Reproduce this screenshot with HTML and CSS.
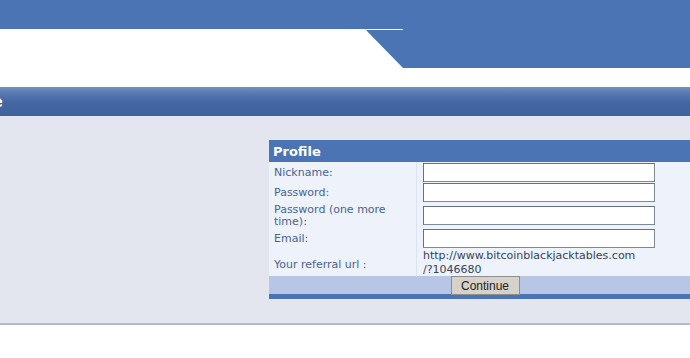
FILE: index.html
```html
<!DOCTYPE html>
<html lang="en">
<head>
    <meta charset="UTF-8">
    <title>Profile</title>
    <link rel="stylesheet" href="styles.css">
</head>
<body>
    <div class="top-band"></div>
    <div class="banner">
        <div class="banner-tab"></div>
    </div>
    <div class="title-bar">
        <span class="title-text">Profile</span>
    </div>

    <div class="main">
        <form class="profile" onsubmit="return false">
            <div class="profile-head">Profile</div>
            <div class="profile-rows">
                <div class="row row-1">
                    <label class="cell-label" for="nick">Nickname:</label>
                    <div class="cell-field"><input type="text" id="nick"></div>
                </div>
                <div class="row row-2">
                    <label class="cell-label" for="pass">Password:</label>
                    <div class="cell-field"><input type="password" id="pass"></div>
                </div>
                <div class="row row-3">
                    <label class="cell-label" for="pass2">Password (one more time):</label>
                    <div class="cell-field"><input type="password" id="pass2"></div>
                </div>
                <div class="row row-4">
                    <label class="cell-label" for="email">Email:</label>
                    <div class="cell-field"><input type="text" id="email"></div>
                </div>
                <div class="row row-5">
                    <div class="cell-label">Your referral url :</div>
                    <div class="cell-field referral">http://www.bitcoinblackjacktables.com<br>/?1046680</div>
                </div>
            </div>
            <div class="profile-foot">
                <button type="submit">Continue</button>
            </div>
        </form>
    </div>
</body>
</html>
```

FILE: styles.css
```css
:root {
    --brand-blue: #4a74b3;
    --page-bg: #e3e6ee;
    --label-bg: #edf2fb;
    --foot-bg: #b7c6e4;
    --label-text: #4a6391;
}

* {
    margin: 0;
    padding: 0;
    box-sizing: border-box;
}

body {
    margin: 0;
    width: 690px;
    height: 358px;
    overflow: hidden;
    background: #fff;
    font-family: 'DejaVu Sans', Verdana, sans-serif;
    font-size: 11px;
}

/* Header */
.top-band {
    height: 29px;
    background: var(--brand-blue);
}

.banner {
    height: 58px;
    background: #fff;
}

.banner-tab {
    position: relative;
    margin-left: 365px;
    height: 39px;
    background: var(--brand-blue);
    clip-path: polygon(0 0, 100% 0, 100% 100%, 38px 100%);
}

.banner-tab::before {
    content: '';
    position: absolute;
    top: 0;
    left: 0;
    width: 38px;
    height: 1px;
    background: #fff;
}

.title-bar {
    height: 29px;
    overflow: hidden;
    background: linear-gradient(to bottom, #7190c0 0%, #5577b0 25%, #4466a0 55%, #3f62a0 100%);
    display: flex;
    align-items: center;
}

.title-text {
    margin-left: -56px;
    color: #fff;
    font-weight: bold;
    font-size: 16px;
}

/* Content */
.main {
    height: 209px;
    background: var(--page-bg);
    border-bottom: 2px solid #b6bac2;
    padding: 24px 0 0 269px;
}

.profile {
    width: 432px;
    background: var(--label-bg);
}

.profile-head {
    height: 22px;
    line-height: 23px;
    padding-left: 4px;
    background: var(--brand-blue);
    color: #fff;
    font-weight: bold;
    font-size: 13px;
}

.row {
    display: grid;
    grid-template-columns: 148px 1fr;
}

.row-1 { height: 20px; }
.row-2 { height: 20px; }
.row-3 { height: 27px; }
.row-4 { height: 19px; }
.row-5 { height: 28px; }

.cell-label {
    display: flex;
    align-items: center;
    padding: 1px 0 0 5px;
    color: var(--label-text);
    line-height: 12px;
    border-right: 1px solid #dbe3f0;
}

.row-3 .cell-label {
    padding-right: 20px;
}

.row-5 .cell-label {
    padding-top: 4px;
}

.cell-field {
    display: flex;
    align-items: center;
    padding-left: 6px;
}

.row-1 .cell-field {
    align-items: flex-end;
}

input {
    width: 232px;
    height: 19px;
    background: #fff;
    border: 1px solid #7a8a99;
    border-top-color: #66727e;
    border-left-color: #66727e;
    font-family: inherit;
    font-size: 11px;
}

.referral {
    color: #35435a;
    line-height: 14px;
    padding-top: 1px;
}

.profile-foot {
    height: 18px;
    background: var(--foot-bg);
    border-bottom: 5px solid var(--brand-blue);
    box-sizing: content-box;
    display: flex;
    justify-content: center;
    align-items: flex-start;
}

button {
    position: relative;
    z-index: 1;
    width: 69px;
    height: 19px;
    background: #d6d2ca;
    border: 1px solid #8e8e8e;
    color: #222;
    font-family: 'Liberation Sans', Arial, sans-serif;
    font-size: 12px;
    cursor: pointer;
}
```
